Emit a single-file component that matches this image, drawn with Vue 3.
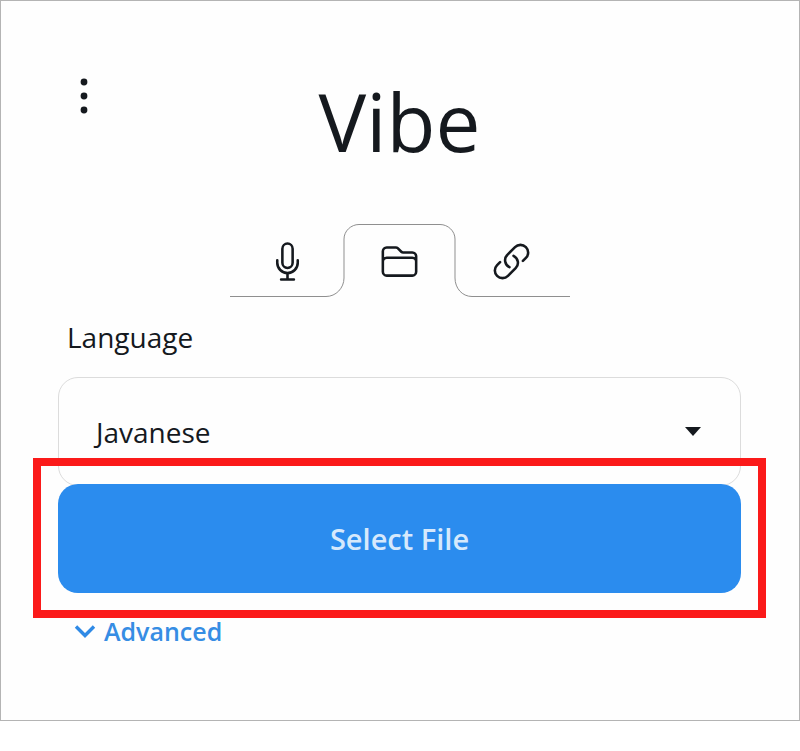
<template>
  <div class="window">
    <header class="top">
      <button type="button" class="menu-btn" aria-label="menu">
        <svg width="8" height="36" viewBox="0 0 8 36" fill="#15191e">
          <circle cx="4" cy="4" r="3.4" />
          <circle cx="4" cy="18" r="3.4" />
          <circle cx="4" cy="32" r="3.4" />
        </svg>
      </button>
      <h1 class="title">Vibe</h1>
    </header>

    <div class="tabs">
      <svg class="tabs-line" width="340" height="74" viewBox="0 0 340 74" fill="none">
        <path d="M0 72.5H96C106 72.5 114 64 114 54V15C114 7 121 .5 129 .5H210C218 .5 225 7 225 15V54C225 64 232 72.5 242 72.5H340" stroke="#8f8f8f" />
      </svg>
      <button v-for="tab in tabs" :key="tab.name" type="button" class="tab" :aria-label="tab.name">
        <svg width="41" height="41" viewBox="0 0 24 24" fill="none" stroke="#15191e" stroke-width="1.5" stroke-linecap="round" stroke-linejoin="round">
          <path :d="tab.icon" />
        </svg>
      </button>
    </div>

    <label class="field-label">Language</label>
    <div class="select">
      <span>Javanese</span>
      <span class="caret"></span>
    </div>

    <button type="button" class="primary">Select File</button>

    <div class="advanced">
      <svg width="22" height="14" viewBox="0 0 22 14" fill="none" stroke="#2f8ae6" stroke-width="3.4">
        <path d="M2 2.5l9 9 9-9" />
      </svg>
      <span>Advanced</span>
    </div>

    <!-- highlight drawn on top of the screenshot -->
    <div class="highlight"></div>
  </div>
</template>

<script setup>
const tabs = [
  {
    name: 'Record',
    icon: 'M12 18.75a6 6 0 0 0 6-6v-1.5m-6 7.5a6 6 0 0 1-6-6v-1.5m6 7.5v3.75m-3.75 0h7.5M12 15.75a3 3 0 0 1-3-3V4.5a3 3 0 1 1 6 0v8.25a3 3 0 0 1-3 3Z',
  },
  {
    name: 'Files',
    icon: 'M2.25 12.75V12A2.25 2.25 0 0 1 4.5 9.75h15A2.25 2.25 0 0 1 21.75 12v.75m-8.69-6.44-2.12-2.12a1.5 1.5 0 0 0-1.061-.44H4.5A2.25 2.25 0 0 0 2.25 6v12a2.25 2.25 0 0 0 2.25 2.25h15A2.25 2.25 0 0 0 21.75 18V9a2.25 2.25 0 0 0-2.25-2.25h-5.379a1.5 1.5 0 0 1-1.06-.44Z',
  },
  {
    name: 'Link',
    icon: 'M13.19 8.688a4.5 4.5 0 0 1 1.242 7.244l-4.5 4.5a4.5 4.5 0 0 1-6.364-6.364l1.757-1.757m13.35-.622 1.757-1.757a4.5 4.5 0 0 0-6.364-6.364l-4.5 4.5a4.5 4.5 0 0 0 1.242 7.244',
  },
]
</script>

<style>
body {
  background: #fff;
}
</style>

<style scoped>
.window {
  position: relative;
  box-sizing: border-box;
  width: 800px;
  height: 721px;
  padding: 0 58px 0 57px;
  border: 1px solid #b4b4b4;
  background: #fefefe;
  color: #15191e;
  font-family: "Open Sans", "Noto Sans", sans-serif;
}

.top {
  display: grid;
  grid-template-columns: 1fr auto 1fr;
  height: 223px;
}

.menu-btn {
  justify-self: start;
  align-self: start;
  margin: 77px 0 0 22px;
  padding: 0;
  border: 0;
  background: none;
  line-height: 0;
}

.title {
  grid-column: 2;
  margin: 60px 0 0;
  font-size: 80px;
  font-weight: 400;
  line-height: 120px;
}

.tabs {
  position: relative;
  display: flex;
  justify-content: center;
  width: 340px;
  height: 73px;
  margin: 0 auto;
}

.tabs-line {
  position: absolute;
  top: 0;
  left: 0;
}

.tab {
  position: relative;
  display: flex;
  justify-content: center;
  width: 112px;
  padding: 17px 0 0;
  border: 0;
  background: none;
}

.field-label {
  display: block;
  margin: 20px 0 0 9px;
  font-size: 28px;
  line-height: 40px;
}

.select {
  display: flex;
  align-items: center;
  justify-content: space-between;
  box-sizing: border-box;
  height: 109px;
  margin-top: 20px;
  padding: 0 39px 0 37px;
  border: 1px solid #dcdcdc;
  border-radius: 20px;
  font-size: 28px;
}

.caret {
  width: 0;
  height: 0;
  border-top: 9px solid #15191e;
  border-left: 8px solid transparent;
  border-right: 8px solid transparent;
}

.primary {
  display: block;
  position: relative;
  width: 100%;
  height: 109px;
  margin-top: -2px;
  border: 0;
  border-radius: 20px;
  background: #2b8cee;
  color: #d6e9fc;
  font-family: inherit;
  font-size: 29px;
  font-weight: 600;
}

.advanced {
  display: flex;
  align-items: center;
  gap: 8px;
  margin: 20px 0 0 16px;
  color: #368de4;
  font-size: 25px;
  font-weight: 600;
  line-height: 36px;
}

.highlight {
  position: absolute;
  left: 32px;
  top: 457px;
  width: 733px;
  height: 160px;
  box-sizing: border-box;
  border: 8px solid #fb1a1a;
}
</style>
